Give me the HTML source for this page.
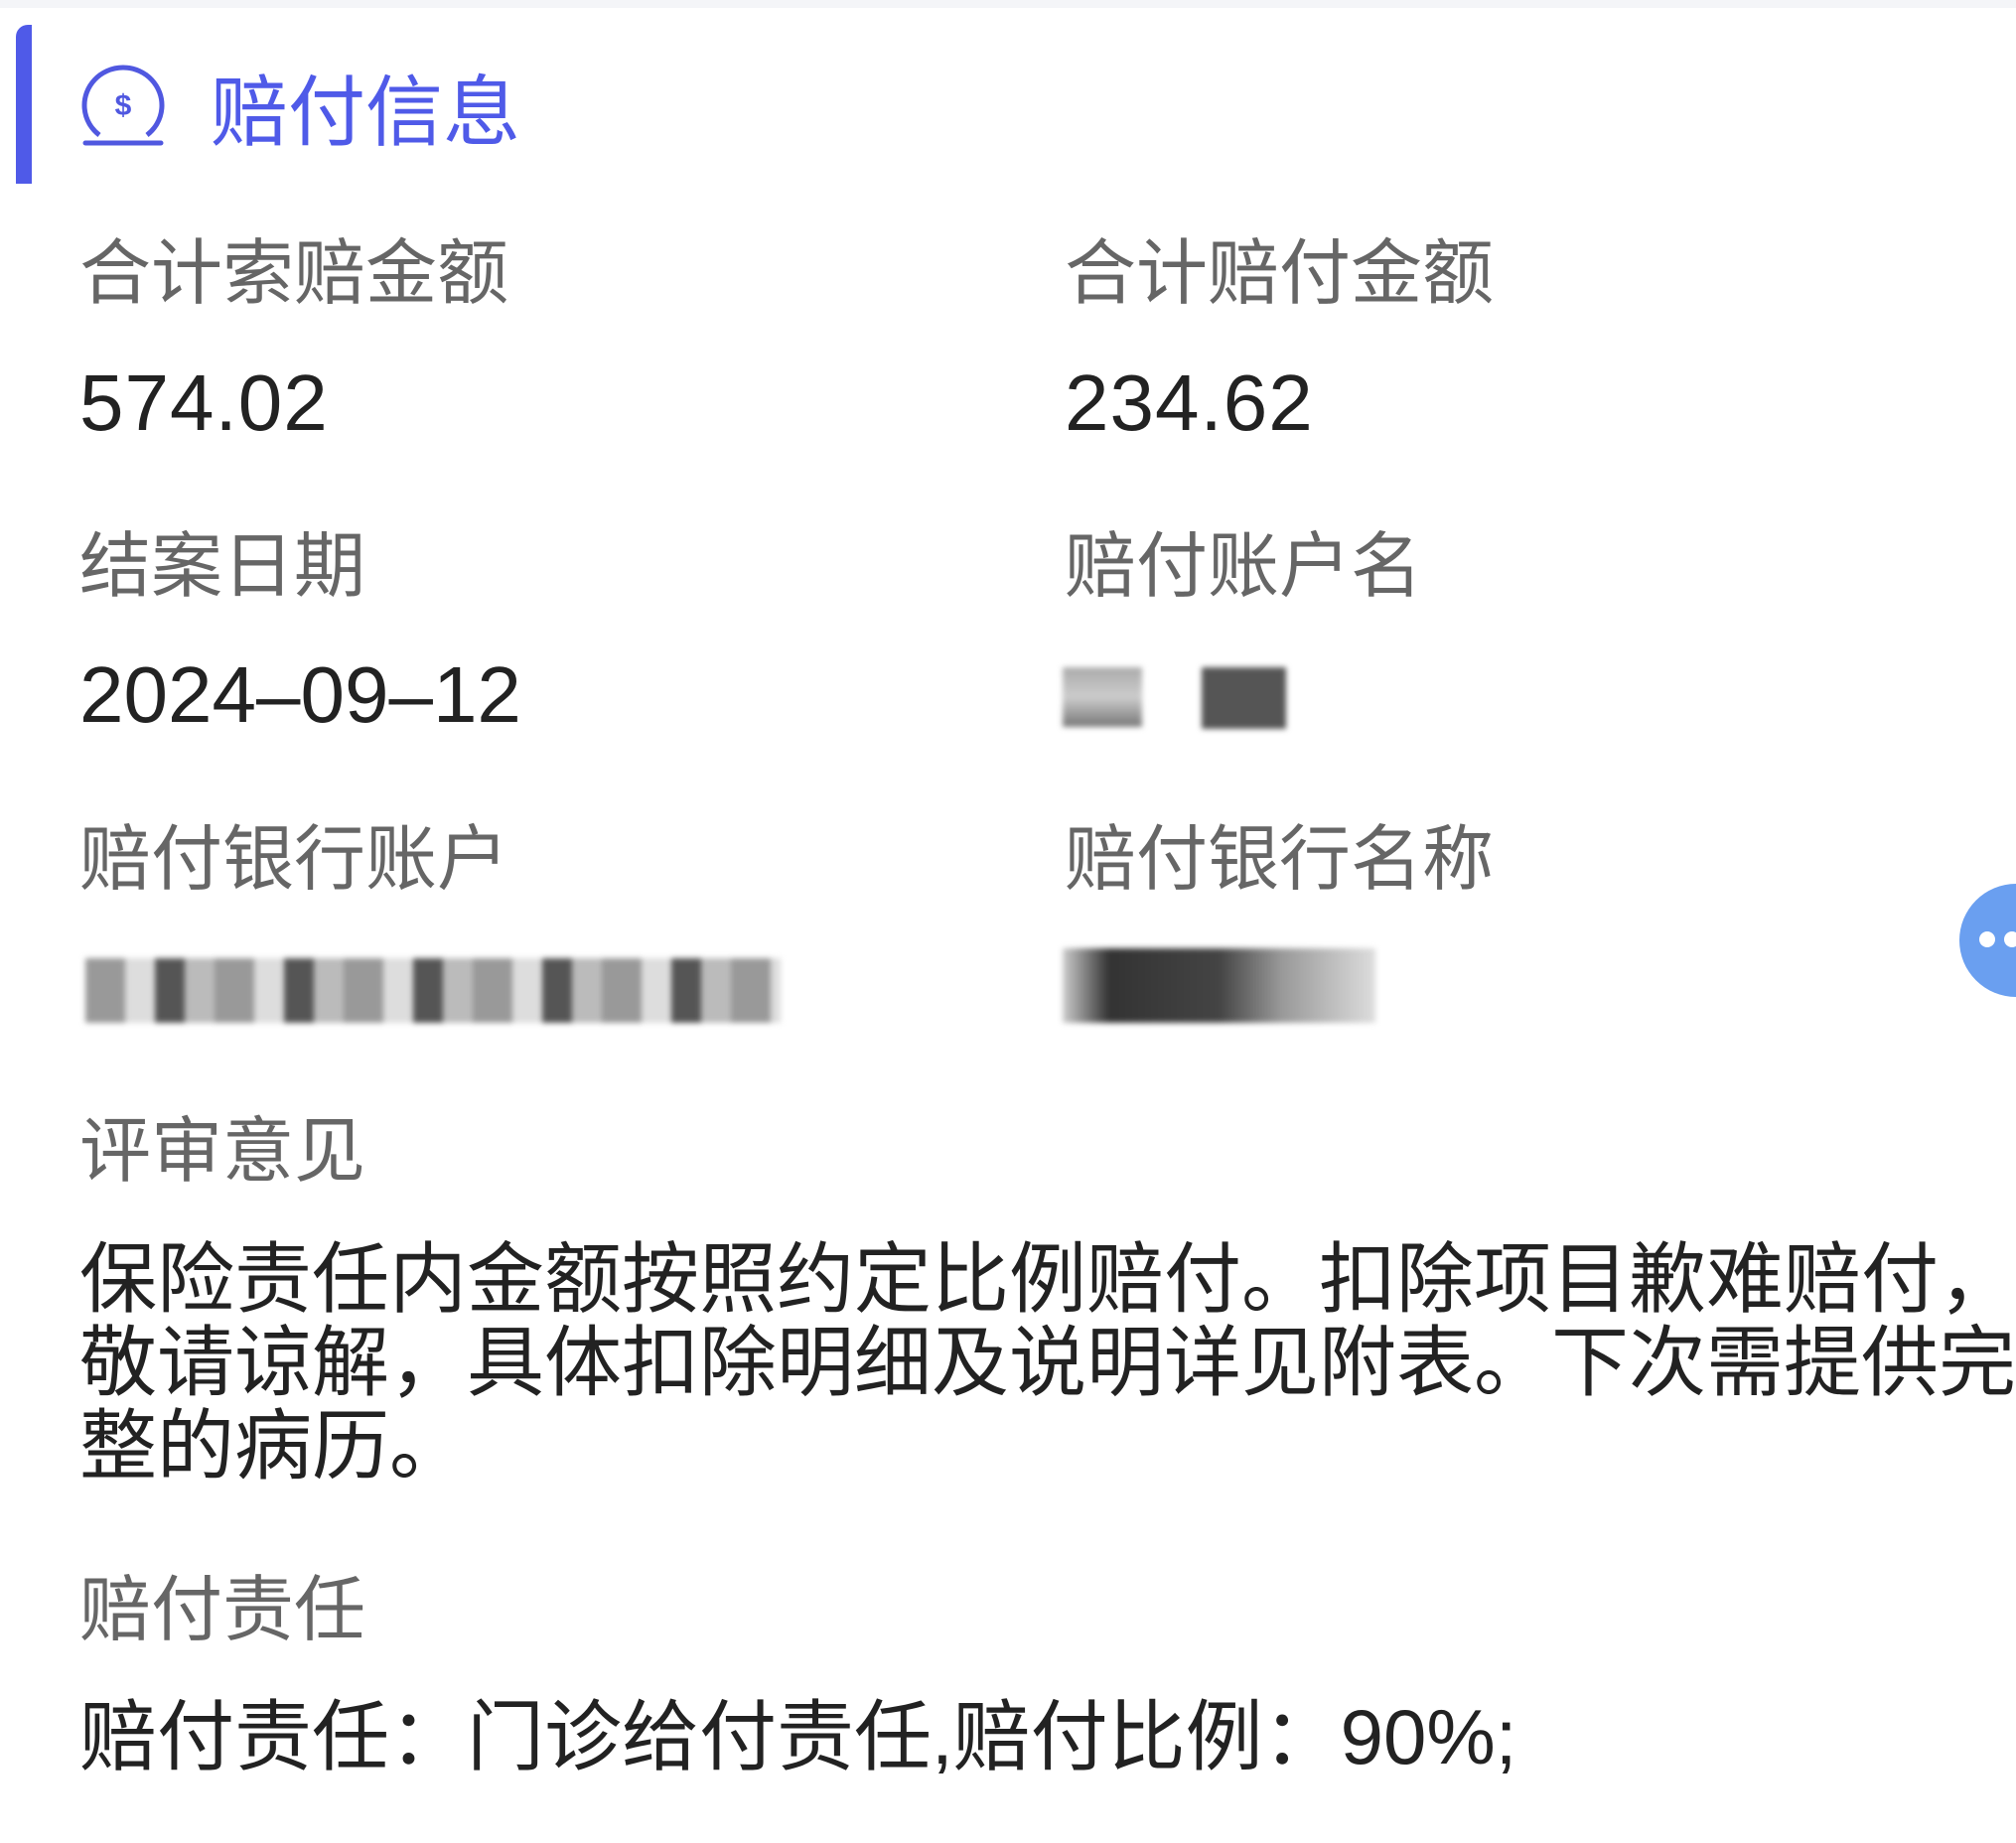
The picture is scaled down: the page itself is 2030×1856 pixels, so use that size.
<!DOCTYPE html>
<html><head><meta charset="utf-8"><style>
html,body{margin:0;padding:0;width:2030px;height:1856px;background:#fff;overflow:hidden;font-family:"Liberation Sans","Noto Sans CJK SC",sans-serif;}
.abs{position:absolute;white-space:nowrap;}
.lab{color:#666;font-size:72px;line-height:1;}
.val{color:#222;font-size:80px;line-height:1;letter-spacing:1px;}
.blk{position:absolute;filter:blur(3px);}
</style></head><body>
<div class="abs" style="left:0;top:0;width:2030px;height:8px;background:#f4f5f8"></div>
<div class="abs" style="left:16px;top:25px;width:16px;height:160px;background:#4f5ae8;border-radius:12px 0 0 0"></div>
<svg class="abs" style="left:80px;top:64px" width="88" height="84" viewBox="0 0 88 84">
<path d="M20 72 A39 38 0 1 1 68 72" fill="none" stroke="#5058e0" stroke-width="5"/>
<line x1="6" y1="80" x2="82" y2="80" stroke="#5058e0" stroke-width="5" stroke-linecap="round"/>
<text x="44" y="52" text-anchor="middle" font-family="Liberation Sans" font-weight="bold" font-size="30" fill="#5058e0">$</text>
</svg>
<div class="abs" style="left:212px;top:74px;font-size:78px;color:#4f5ae8;line-height:1">赔付信息</div>

<div class="abs lab" style="left:80px;top:240px">合计索赔金额</div>
<div class="abs lab" style="left:1072px;top:240px">合计赔付金额</div>
<div class="abs val" style="left:80px;top:366px">574.02</div>
<div class="abs val" style="left:1072px;top:366px">234.62</div>

<div class="abs lab" style="left:80px;top:535px">结案日期</div>
<div class="abs lab" style="left:1072px;top:535px">赔付账户名</div>
<div class="abs val" style="left:80px;top:660px;letter-spacing:0">2024–09–12</div>
<div class="blk" style="left:1070px;top:672px;width:80px;height:60px;background:linear-gradient(#aaa,#ccc 50%,#777)"></div>
<div class="blk" style="left:1210px;top:672px;width:85px;height:62px;background:#555"></div>

<div class="abs lab" style="left:80px;top:830px">赔付银行账户</div>
<div class="abs lab" style="left:1072px;top:830px">赔付银行名称</div>
<div class="blk" style="left:86px;top:965px;width:700px;height:65px;background:repeating-linear-gradient(90deg,#999 0 40px,#ddd 40px 70px,#555 70px 100px,#bbb 100px 130px)"></div>
<div class="blk" style="left:1070px;top:955px;width:315px;height:75px;background:linear-gradient(90deg,#ccc 0,#333 15%,#444 50%,#999 70%,#ddd 100%)"></div>

<div class="abs lab" style="left:80px;top:1124px">评审意见</div>
<div class="abs" style="left:80px;top:1246px;font-size:78px;line-height:84px;color:#222;white-space:normal;width:1960px;word-break:break-all">保险责任内金额按照约定比例赔付。扣除项目歉难赔付，敬请谅解，具体扣除明细及说明详见附表。下次需提供完整的病历。</div>

<div class="abs lab" style="left:80px;top:1586px">赔付责任</div>
<div class="abs val" style="left:80px;top:1710px;letter-spacing:0;font-size:78px">赔付责任：门诊给付责任,赔付比例：90%;</div>

<div class="abs" style="left:1973px;top:890px;width:114px;height:114px;border-radius:50%;background:#6a9ff0"></div>
<div class="abs" style="left:1993px;top:938px;width:16px;height:16px;border-radius:50%;background:#fff"></div>
<div class="abs" style="left:2018px;top:938px;width:16px;height:16px;border-radius:50%;background:#fff"></div>
</body></html>
